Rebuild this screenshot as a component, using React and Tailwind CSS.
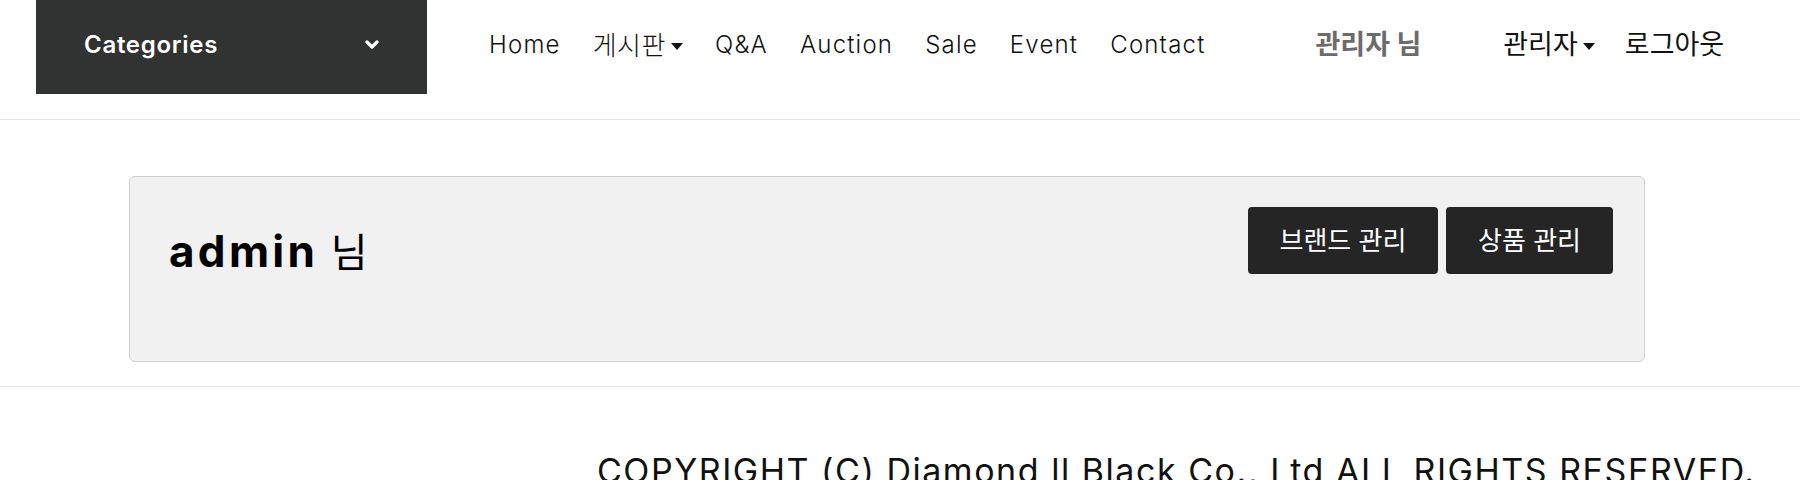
import React from 'react';

const Caret = () => (
  <svg width="12" height="7" viewBox="0 0 12 7" className="ml-[5px] mt-[2px]">
    <path d="M0 0 L12 0 L6 7 Z" fill="#111" />
  </svg>
);

const navItems = [
  { label: 'Home' },
  { label: '게시판', ko: true, caret: true },
  { label: 'Q&A' },
  { label: 'Auction' },
  { label: 'Sale' },
  { label: 'Event' },
  { label: 'Contact' },
];

const Header = () => {
  return (
    <header className="h-[120px] border-b border-[#e6e6e6]">
      <div className="flex items-center h-[94px]">
        {/* Categories box */}
        <div className="ml-[36px] w-[391px] h-full bg-[#313232] flex items-center justify-between pl-[48px] pr-[48px] pb-[4px]">
          <span className="text-white text-[24px] font-semibold tracking-[0.03em]">Categories</span>
          <svg width="14" height="10" viewBox="0 0 14 10">
            <path d="M2 2 L7 7 L12 2" stroke="#fff" strokeWidth="3.2" fill="none" strokeLinecap="round" strokeLinejoin="round" />
          </svg>
        </div>

        {/* Main menu */}
        <nav className="ml-[62px] mb-[4px] flex items-center gap-8 text-[24px] tracking-[0.05em] text-[#111] font-light">
          {navItems.map((item) => (
            <span key={item.label} className={item.ko ? 'flex items-center text-[26px] tracking-[0.02em] font-light' : 'flex items-center'}>
              {item.label}
              {item.caret && <Caret />}
            </span>
          ))}
        </nav>

        <span className="ml-[110px] mb-[4px] text-[27px] font-bold text-[#6b6b6b]">관리자 님</span>

        <div className="ml-[82px] mb-[4px] flex items-center gap-[30px] text-[27px] text-[#111]">
          <span className="flex items-center">
            관리자
            <Caret />
          </span>
          <span>로그아웃</span>
        </div>
      </div>
    </header>
  );
};

const App = () => {
  return (
    <div className="w-[1800px] h-[480px] overflow-hidden bg-white font-['Inter','Noto_Sans_CJK_KR',sans-serif]">
      <Header />

      <section className="pt-[56px] pb-[24px] border-b border-[#e6e6e6]">
        <div className="ml-[129px] w-[1516px] h-[186px] rounded-[6px] border border-[#d0d0d0] bg-[#f1f1f1] flex justify-between pl-[39px] pr-[31px] pt-[30px]">
          <h2 className="mt-[22px] text-[44px] leading-none text-black">
            <span className="font-bold tracking-[0.075em]">admin</span>{' '}
            <span className="font-normal text-[40px]">님</span>
          </h2>
          <div className="flex gap-2 h-[67px]">
            <button className="w-[190px] rounded-[4px] bg-[#252525] text-white text-[26px]">브랜드 관리</button>
            <button className="w-[167px] rounded-[4px] bg-[#252525] text-white text-[26px]">상품 관리</button>
          </div>
        </div>
      </section>

      <footer className="pt-[67px] pl-[597px] whitespace-nowrap text-[34px] tracking-[0.045em] leading-none text-[#111]">
        COPYRIGHT (C) Diamond ll Black Co., Ltd ALL RIGHTS RESERVED.
      </footer>
    </div>
  );
};

export default App;
